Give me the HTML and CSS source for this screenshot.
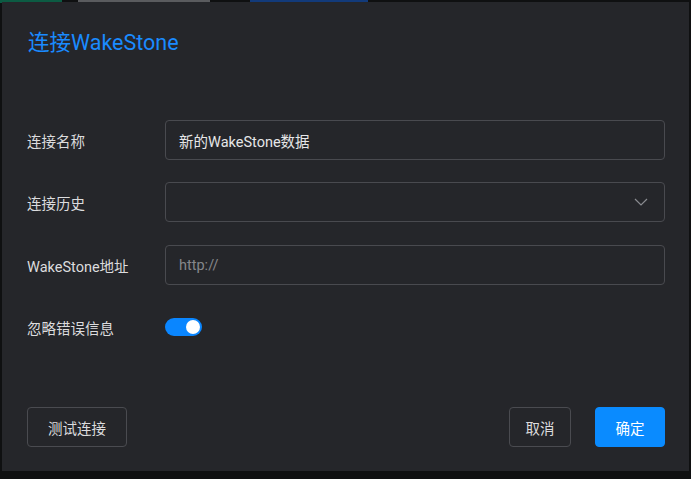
FILE: index.html
```html
<!DOCTYPE html>
<html lang="zh">
<head>
<meta charset="utf-8">
<link rel="stylesheet" href="styles.css">
</head>
<body>
<div class="backdrop">
  <div class="bg-strip green"></div>
  <div class="bg-strip gray"></div>
  <div class="bg-strip blue"></div>
</div>
<div class="dialog">
  <h1 class="title">连接WakeStone</h1>
  <div class="form">
    <div class="row">
      <div class="label">连接名称</div>
      <div class="field"><span class="value">新的WakeStone数据</span></div>
    </div>
    <div class="row">
      <div class="label">连接历史</div>
      <div class="field select">
        <span class="value"></span>
        <svg class="chevron" width="14" height="8" viewBox="0 0 14 8"><path d="M1 1 L7 7 L13 1" fill="none" stroke="#8a8b90" stroke-width="1.2"/></svg>
      </div>
    </div>
    <div class="row">
      <div class="label">WakeStone地址</div>
      <div class="field"><span class="placeholder">http://</span></div>
    </div>
    <div class="row">
      <div class="label">忽略错误信息</div>
      <div class="switch"><span class="knob"></span></div>
    </div>
  </div>
  <div class="footer">
    <button class="btn test">测试连接</button>
    <div class="spacer"></div>
    <button class="btn cancel">取消</button>
    <button class="btn primary">确定</button>
  </div>
</div>
</body>
</html>
```
FILE: styles.css
```css
* { box-sizing: border-box; }
html, body { margin: 0; }
body {
  width: 691px;
  height: 479px;
  background: #0f1011;
  padding: 2px;
  font-family: "Roboto", "Noto Sans CJK SC", sans-serif;
  position: relative;
  overflow: hidden;
}
.backdrop { position: absolute; inset: 0; }
.bg-strip { position: absolute; top: 0; height: 3px; }
.bg-strip.green { left: 0; width: 62px; background: #0c5b43; }
.bg-strip.gray { left: 78px; width: 132px; background: #5a5b5e; }
.bg-strip.blue { left: 250px; width: 118px; background: #123a7a; }
.dialog {
  position: relative;
  width: 687px;
  height: 469px;
  background: #25262a;
  padding: 26px 24px 24px 25px;
  display: flex;
  flex-direction: column;
}
.title {
  margin: 0 0 0 1px;
  font-size: 21.5px;
  line-height: 30px;
  font-weight: 400;
  color: #1a8bff;
}
.form {
  margin-top: 62px;
  display: flex;
  flex-direction: column;
  gap: 22px;
}
.row {
  display: flex;
  align-items: center;
  height: 40px;
}
.row:nth-child(3) { margin-top: 1px; }
.label {
  width: 138px;
  font-size: 14.5px;
  color: #dcdcde;
}
.field {
  flex: 1;
  height: 40px;
  border: 1px solid #494a4f;
  border-radius: 4px;
  display: flex;
  align-items: center;
  padding: 0 13px;
  font-size: 14.5px;
}
.value { color: #e6e6e8; flex: 1; }
.placeholder { color: #85868a; }
.chevron { margin-right: 3px; }
.switch {
  width: 37px;
  height: 18px;
  border-radius: 9px;
  background: #0a86ff;
  display: flex;
  align-items: center;
  justify-content: flex-end;
  padding: 0 2px;
}
.knob {
  width: 14px;
  height: 14px;
  border-radius: 50%;
  background: #fff;
}
.footer {
  margin-top: auto;
  display: flex;
  align-items: center;
  gap: 24px;
}
.spacer { flex: 1; }
.btn {
  height: 40px;
  padding: 0;
  border: 1px solid #4a4b50;
  border-radius: 4px;
  background: transparent;
  color: #dcdcde;
  font-family: inherit;
  font-size: 14.5px;
}
.btn.test { width: 100px; }
.btn.cancel { width: 62px; }
.btn.primary {
  width: 70px;
  background: #0a8bff;
  border-color: #0a8bff;
  color: #fff;
}
```
